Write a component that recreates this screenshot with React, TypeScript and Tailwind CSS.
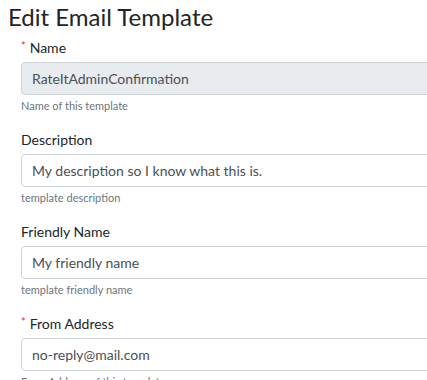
import React from 'react';

type Field = {
  label: string;
  required?: boolean;
  value: string;
  help: string;
  disabled?: boolean;
};

const fields: Field[] = [
  { label: 'Name', required: true, value: 'RateItAdminConfirmation', help: 'Name of this template', disabled: true },
  { label: 'Description', value: 'My description so I know what this is.', help: 'template description' },
  { label: 'Friendly Name', value: 'My friendly name', help: 'template friendly name' },
  { label: 'From Address', required: true, value: 'no-reply@mail.com', help: 'From Address of this template' },
];

function FormField({ f }: { f: Field }) {
  return (
    <div className="mb-[15px]">
      <label className="flex items-center h-[21px] text-[14px] leading-[21px] text-[#212529]">
        {f.required && <span className="mr-[4px] text-[11px] leading-none text-[#f5222d] -mt-[4px]">*</span>}
        {f.label}
      </label>
      <input
        readOnly
        disabled={f.disabled}
        value={f.value}
        className={
          'mt-[4px] block w-[520px] h-[33px] rounded-[4px] border border-[#ced4da] pl-[10px] text-[14px] text-[#495057] outline-none ' +
          (f.disabled ? 'bg-[#e9ecef]' : 'bg-white')
        }
      />
      <div className="mt-[2px] h-[17px] text-[11px] leading-[17px] text-[#6c757d]">{f.help}</div>
    </div>
  );
}

export default function App() {
  return (
    <div className="w-[427px] h-[380px] overflow-hidden bg-white" style={{ fontFamily: 'Lato, "Noto Sans", sans-serif' }}>
      <h1 className="pl-[8px] pt-[2px] h-[37px] text-[24px] leading-[29px] text-[#212529]">Edit Email Template</h1>
      <form className="pl-[21px]">
        {fields.map(f => (
          <FormField key={f.label} f={f} />
        ))}
      </form>
    </div>
  );
}
